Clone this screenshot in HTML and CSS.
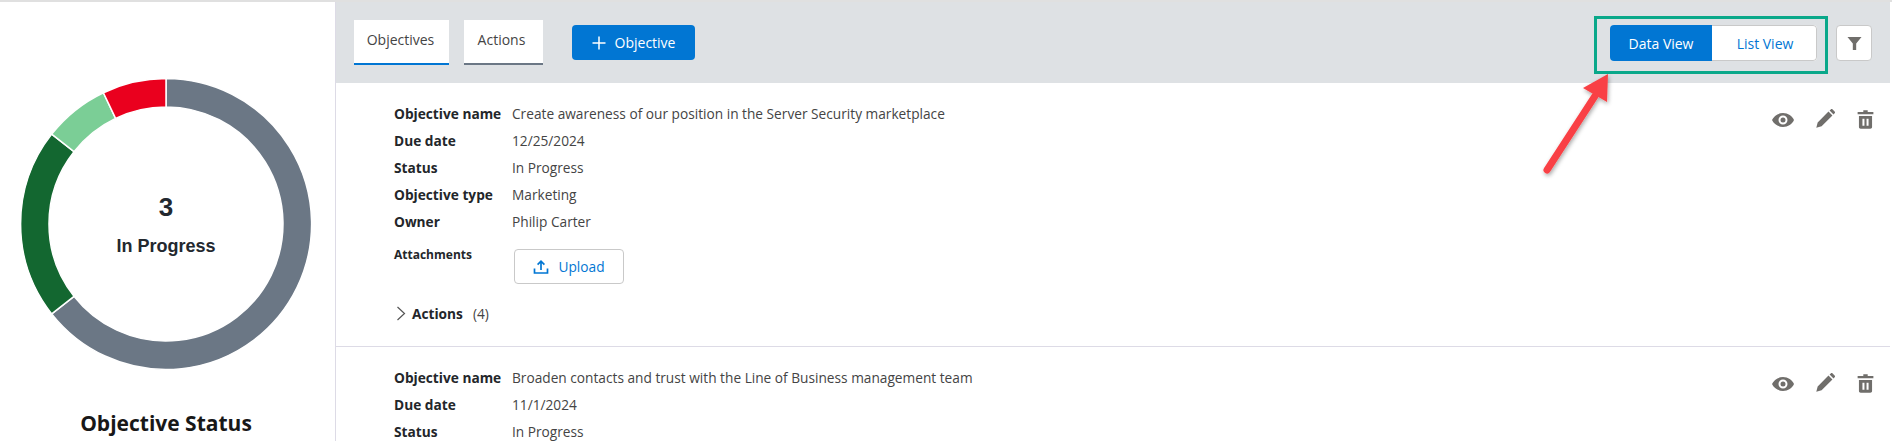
FILE: index.html
```html
<!DOCTYPE html>
<html lang="en">
<head>
<meta charset="utf-8">
<title>Objectives</title>
<link rel="stylesheet" href="styles.css">
</head>
<body>
<div class="page">
  <aside class="side">
    <div class="donut">
      <svg width="300" height="300" viewBox="0 0 300 300">
        <g fill="none" stroke="#fff" stroke-width="1.500" stroke-linejoin="round">
          <path fill="#6b7785" d="M150 4.500A145.500 145.500 0 1 1 35.700 239.900L58 222.300A117 117 0 1 0 150 33Z"/>
          <path fill="#136730" d="M35.700 239.900A145.500 145.500 0 0 1 35.700 60.100L58 77.700A117 117 0 0 0 58 222.300Z"/>
          <path fill="#7bce96" d="M35.700 60.100A145.500 145.500 0 0 1 87.400 18.700L99.600 44.400A117 117 0 0 0 58 77.700Z"/>
          <path fill="#ea001e" d="M87.400 18.700A145.500 145.500 0 0 1 150 4.500L150 33A117 117 0 0 0 99.600 44.400Z"/>
        </g>
      </svg>
      <div class="donut-label">
        <div class="donut-num">3</div>
        <div class="donut-text">In Progress</div>
      </div>
    </div>
    <h2 class="side-title">Objective Status</h2>
  </aside>
  <main class="main">
    <header class="bar">
      <div class="tabs">
        <div class="tab tab-on">Objectives</div>
        <div class="tab tab-off">Actions</div>
      </div>
      <button class="add"><svg class="add-ico" viewBox="0 0 14 14" width="14" height="14"><path d="M7 0.500V13.500M0.500 7H13.500" stroke="#fff" stroke-width="1.500" fill="none"/></svg>Objective</button>
      <div class="bar-right">
        <div class="toggle">
          <div class="seg seg-on">Data View</div>
          <div class="seg seg-off">List View</div>
        </div>
        <button class="filter"><svg viewBox="0 0 16 16" width="15" height="15"><path d="M0.500 1H15.500L9.800 8V15L6.200 15V8Z" fill="#706e6b"/></svg></button>
      </div>
    </header>
    <section class="item">
      <div class="fields">
        <div class="row"><span class="k">Objective name</span><span class="v">Create awareness of our position in the Server Security marketplace</span></div>
        <div class="row"><span class="k">Due date</span><span class="v">12/25/2024</span></div>
        <div class="row"><span class="k">Status</span><span class="v">In Progress</span></div>
        <div class="row"><span class="k">Objective type</span><span class="v">Marketing</span></div>
        <div class="row"><span class="k">Owner</span><span class="v">Philip Carter</span></div>
        <div class="attach">
          <span class="k k-small">Attachments</span>
          <button class="upload"><svg viewBox="0 0 16 16" width="16" height="16"><path d="M8 11V2.500M4.600 5.600L8 2.200L11.400 5.600M1.500 9.500V14H14.500V9.500" fill="none" stroke="#0176d3" stroke-width="1.700"/></svg>Upload</button>
        </div>
        <div class="more"><svg viewBox="0 0 10 16" width="10" height="16"><path d="M1.500 2L8.500 8.500L1.500 15" fill="none" stroke="#555" stroke-width="1.200"/></svg><span class="more-k">Actions</span><span class="v">(4)</span></div>
      </div>
      <div class="tools">
        <svg class="t-eye" viewBox="0 0 24 24" width="24" height="24"><path fill="#706e6b" d="M12 5C7 5 2.700 8.100 1 12c1.700 3.900 6 7 11 7s9.300-3.100 11-7c-1.700-3.900-6-7-11-7zm0 11.500a4.500 4.500 0 1 1 0-9 4.500 4.500 0 0 1 0 9zm0-7a2.500 2.500 0 1 0 0 5 2.500 2.500 0 0 0 0-5z"/></svg>
        <svg viewBox="0 0 24 24" width="22" height="22"><path fill="#706e6b" d="M2.500 21.500l1.500-5.800L15.800 3.900l4.300 4.300L8.300 20zM17 2.700l1.300-1.200c.6-.6 1.400-.6 2 0l2.200 2.200c.6.600.6 1.400 0 2L21.300 7z"/></svg>
        <svg class="t-trash" viewBox="0 0 24 24" width="21" height="21"><path fill="#706e6b" d="M9.500 1.500h5v2h6.500v2.500H3V3.500h6.500zM4.500 8h15v12.500c0 1.100-.9 2-2 2h-11c-1.100 0-2-.9-2-2zm4 3v8h2.300v-8zm4.700 0v8h2.300v-8z"/></svg>
      </div>
    </section>
    <section class="item item-last">
      <div class="fields">
        <div class="row"><span class="k">Objective name</span><span class="v">Broaden contacts and trust with the Line of Business management team</span></div>
        <div class="row"><span class="k">Due date</span><span class="v">11/1/2024</span></div>
        <div class="row"><span class="k">Status</span><span class="v">In Progress</span></div>
      </div>
      <div class="tools">
        <svg class="t-eye" viewBox="0 0 24 24" width="24" height="24"><path fill="#706e6b" d="M12 5C7 5 2.700 8.100 1 12c1.700 3.900 6 7 11 7s9.300-3.100 11-7c-1.700-3.900-6-7-11-7zm0 11.500a4.500 4.500 0 1 1 0-9 4.500 4.500 0 0 1 0 9zm0-7a2.500 2.500 0 1 0 0 5 2.500 2.500 0 0 0 0-5z"/></svg>
        <svg viewBox="0 0 24 24" width="22" height="22"><path fill="#706e6b" d="M2.500 21.500l1.500-5.800L15.800 3.900l4.300 4.300L8.300 20zM17 2.700l1.300-1.200c.6-.6 1.400-.6 2 0l2.200 2.200c.6.600.6 1.400 0 2L21.300 7z"/></svg>
        <svg class="t-trash" viewBox="0 0 24 24" width="21" height="21"><path fill="#706e6b" d="M9.500 1.500h5v2h6.500v2.500H3V3.500h6.500zM4.500 8h15v12.500c0 1.100-.9 2-2 2h-11c-1.100 0-2-.9-2-2zm4 3v8h2.300v-8zm4.700 0v8h2.300v-8z"/></svg>
      </div>
    </section>
  </main>
  <div class="highlight"></div>
  <svg class="arrow" viewBox="0 0 90 120" width="90" height="120">
    <defs><filter id="sh" x="-30%" y="-30%" width="160%" height="160%"><feDropShadow dx="1" dy="2" stdDeviation="2" flood-color="#000" flood-opacity=".35"/></filter></defs>
    <g filter="url(#sh)"><path d="M14 104L62 30" stroke="#f94144" stroke-width="7" stroke-linecap="round" fill="none"/><path d="M75 8L74 36L50 22Z" fill="#f94144"/></g>
  </svg>
</div>
</body>
</html>
```
FILE: styles.css
```css
* { box-sizing: border-box; }
html, body { margin: 0; padding: 0; height: 100%; overflow: hidden; background: #fff; }
body { font-family: "Open Sans", "Noto Sans", sans-serif; font-size: 13.7px; color: #3e3e3c; }
.page { position: relative; display: flex; width: 1892px; height: 441px; overflow: hidden; border-top: 2px solid #e0e0e0; }
.side { width: 336px; flex: none; border-right: 1px solid #dddbe6; display: flex; flex-direction: column; align-items: center; }
.donut { position: relative; width: 300px; height: 300px; margin-top: 72px; margin-left: -3px; }
.donut svg { display: block; }
.donut-label { position: absolute; inset: 0; display: flex; flex-direction: column; align-items: center; justify-content: center; color: #23282f; font-family: "Liberation Sans", Arial, sans-serif; }
.donut-num { font-size: 26px; font-weight: 700; line-height: 28px; margin-top: 1px; }
.donut-text { font-size: 18px; font-weight: 700; line-height: 20px; margin-top: 15px; }
.side-title { margin: 35px 0 0 -3px; font-size: 21px; line-height: 28px; font-weight: 700; color: #181818; }
.main { flex: 1; min-width: 0; display: flex; flex-direction: column; padding-right: 2px; }
.bar { height: 81px; flex: none; background: #dee1e4; display: flex; align-items: flex-start; padding: 18px 18px 0 18px; }
.tabs { display: flex; gap: 15px; }
.tab { height: 45px; background: #fff; padding: 10px 0 0; text-align: center; line-height: 20px; color: #444; font-size: 14px; }
.tab-on { width: 95px; padding-right: 2px; border-bottom: 2px solid #0176d3; }
.tab-off { width: 79px; padding-right: 4px; border-bottom: 2px solid #6b7785; }
.add { margin: 5px 0 0 29px; width: 123px; height: 35px; border: 0; border-radius: 4px; background: #0176d3; color: #fff; font: 500 14px "Open Sans", sans-serif; display: flex; align-items: center; justify-content: center; gap: 9px; }
.bar-right { margin-left: auto; display: flex; gap: 19px; padding-top: 5px; }
.toggle { display: flex; width: 207px; height: 36px; border-radius: 4px; overflow: hidden; background: #fff; }
.seg { display: flex; align-items: center; justify-content: center; font-size: 14px; }
.seg-on { width: 102px; background: #0176d3; color: #fff; font-weight: 500; }
.seg-off { flex: 1; padding-left: 2px; color: #0176d3; border: 1px solid #c9c9c9; border-left: 0; border-radius: 0 4px 4px 0; }
.filter { width: 36px; height: 36px; background: #fff; border: 1px solid #c9c9c9; border-radius: 4px; display: flex; align-items: center; justify-content: center; padding: 0; }
.item { display: flex; justify-content: space-between; padding: 17px 14px 0 58px; border-bottom: 1px solid #dddbe6; height: 264px; flex: none; }
.item-last { border-bottom: 0; }
.fields { display: flex; flex-direction: column; }
.row { display: flex; height: 27px; align-items: center; }
.k { width: 118px; flex: none; font-weight: 700; color: #23262a; }
.k-small { font-size: 12px; }
.v { color: #444; }
.attach { display: flex; align-items: flex-start; margin-top: 8px; }
.attach .k { margin-top: 3px; }
.upload { width: 110px; height: 35px; margin: 6px 0 0 2px; border: 1px solid #c9c9c9; border-radius: 4px; background: #fff; color: #0176d3; font: 13.7px "Open Sans", sans-serif; display: flex; align-items: center; justify-content: center; gap: 9px; }
.more { display: flex; align-items: center; gap: 4px; margin: 18px 0 0 2px; height: 22px; }
.more-k { font-weight: 700; color: #23262a; margin: 0 6px 0 2px; }
.tools { display: flex; align-items: flex-start; gap: 19px; padding-top: 8px; }
.t-trash { margin-top: 1px; }
.highlight { position: absolute; left: 1594px; top: 14px; width: 234px; height: 58px; border: 3px solid #0aa88a; }
.arrow { position: absolute; left: 1533px; top: 64px; }
```
